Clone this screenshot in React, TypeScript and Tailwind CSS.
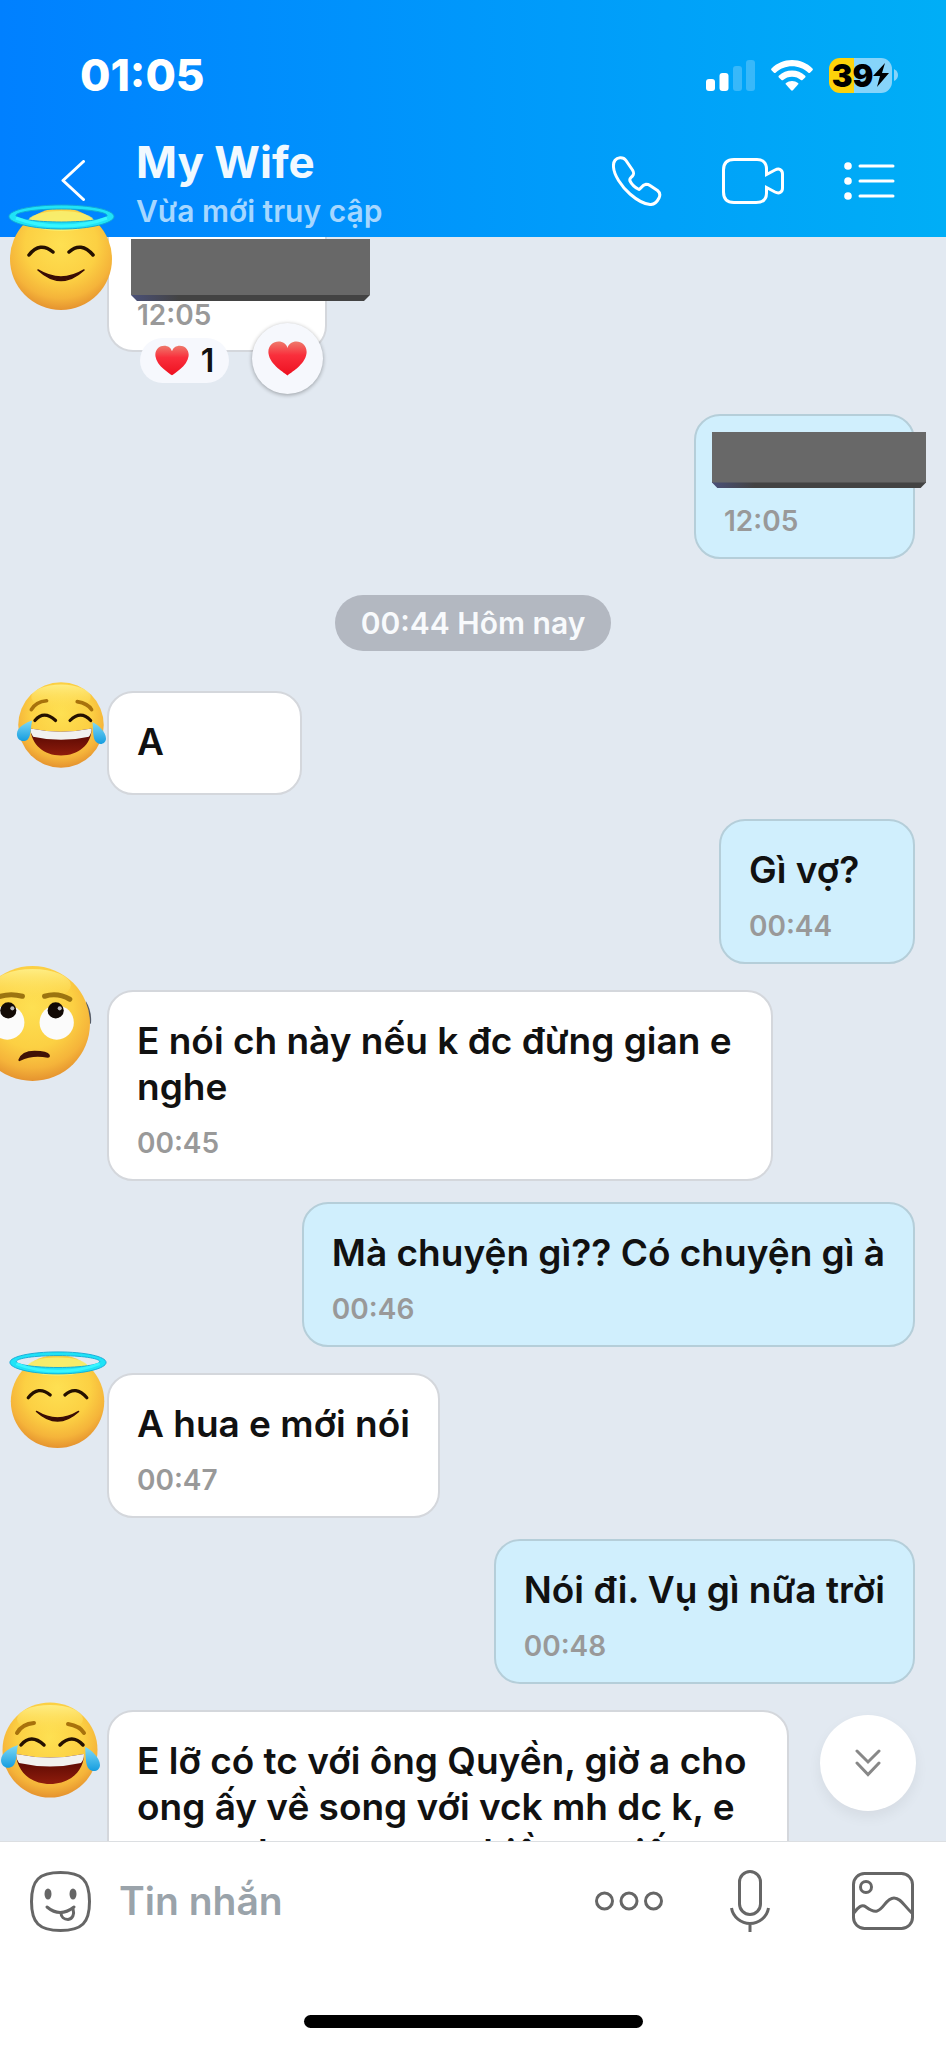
import type { ReactNode } from 'react';
import { clsx } from 'clsx';

/* ---------- emoji ---------- */

const FaceGradients = ({ id }: { id: string }) => (
  <defs>
    <radialGradient id={id} cx="50%" cy="36%" r="64%">
      <stop offset="0" stopColor="#fee052" />
      <stop offset="0.55" stopColor="#fcd043" />
      <stop offset="0.82" stopColor="#f5b43a" />
      <stop offset="1" stopColor="#e5932f" />
    </radialGradient>
    <linearGradient id={`${id}-shine`} x1="0" y1="0" x2="0" y2="1">
      <stop offset="0" stopColor="#fff08a" stopOpacity="0.9" />
      <stop offset="1" stopColor="#ffe25a" stopOpacity="0" />
    </linearGradient>
    <linearGradient id={`${id}-tear`} x1="0" y1="0" x2="0" y2="1">
      <stop offset="0" stopColor="#7fd9f5" />
      <stop offset="1" stopColor="#159de0" />
    </linearGradient>
    <linearGradient id={`${id}-mouth`} x1="0" y1="0" x2="0" y2="1">
      <stop offset="0" stopColor="#4d0500" />
      <stop offset="1" stopColor="#8f1c0c" />
    </linearGradient>
  </defs>
);

const HaloEmoji = ({ id, className }: { id: string; className: string }) => (
  <svg viewBox="0 0 107 107" className={className} role="img" aria-label="😇">
    <FaceGradients id={id} />
    <circle cx="53" cy="55" r="51" fill={`url(#${id})`} />
    <ellipse cx="53" cy="17" rx="33" ry="10" fill="#f6f374" opacity="0.8" />
    <path
      fillRule="evenodd"
      fill="#1fe3f7"
      stroke="#12a9d6"
      strokeWidth="1"
      d="M53.500 1C83 1 106 6 106 12.500S83 25 53.500 25 1 19 1 12.500 24 1 53.500 1ZM53.500 5C28 5 8 8 8 11.500S28 18 53.500 18 99 15 99 11.500 79 5 53.500 5Z"
    />
    <path d="M8 14Q28 22 53.500 22T99 14" fill="none" stroke="#38f6ff" strokeWidth="3" />
    <path
      d="M21 51Q32 37 45 48M61 48Q73 37 85 51"
      fill="none"
      stroke="#241000"
      strokeWidth="3.500"
      strokeLinecap="round"
    />
    <path d="M30 66Q53 87 76 66Q53 80 30 66Z" fill="#3a0d05" stroke="#3a0d05" strokeWidth="1.500" strokeLinejoin="round" />
  </svg>
);

const JoyEmoji = ({ id, className }: { id: string; className: string }) => (
  <svg viewBox="0 0 100 96" className={className} role="img" aria-label="😂">
    <FaceGradients id={id} />
    <circle cx="50" cy="48" r="47.500" fill={`url(#${id})`} />
    <ellipse cx="50" cy="17" rx="33" ry="14" fill={`url(#${id}-shine)`} />
    <path
      d="M17 31Q22 22 34 21M68 22Q80 24 84 31"
      fill="none"
      stroke="#a8720c"
      strokeWidth="4"
      strokeLinecap="round"
    />
    <path
      d="M21 43Q31 31 44 43M60 43Q72 31 83 43"
      fill="none"
      stroke="#241000"
      strokeWidth="3.500"
      strokeLinecap="round"
    />
    <path d="M16 52Q50 59 84 52C84 70 69 82 50 82S17 70 16 52Z" fill={`url(#${id}-mouth)`} />
    <path d="M16 52Q50 59 84 52Q84 58 81 61Q50 68 19 61Q16 57 16 52Z" fill="#f1f1ef" />
    <path d="M18 43C12 45 1 50 1 58C1 65 8 68 13 64C17 60 16 51 18 43Z" fill={`url(#${id}-tear)`} />
    <path d="M85 45C91 47 100 56 100 63C100 69 93 71 89 67C85 63 86 53 85 45Z" fill={`url(#${id}-tear)`} />
  </svg>
);

const RollingEyesEmoji = ({ id, className }: { id: string; className: string }) => (
  <svg viewBox="0 0 116 116" className={className} role="img" aria-label="🙄">
    <FaceGradients id={id} />
    <path d="M110 36Q116 46 115 58L108 60Z" fill="#555b66" />
    <circle cx="57" cy="58" r="57" fill={`url(#${id})`} />
    <ellipse cx="57" cy="20" rx="38" ry="16" fill={`url(#${id}-shine)`} />
    <path d="M20 33Q33 27 47 31M69 31Q82 27 94 34" fill="none" stroke="#9c7410" strokeWidth="5" strokeLinecap="round" />
    <ellipse cx="32" cy="57" rx="17" ry="17" fill="#fbfbfb" />
    <ellipse cx="81" cy="57" rx="17" ry="17" fill="#fbfbfb" />
    <circle cx="33" cy="45" r="8" fill="#120a05" />
    <circle cx="80" cy="45" r="8" fill="#120a05" />
    <circle cx="37" cy="43" r="2" fill="#bbb" />
    <circle cx="84" cy="43" r="2" fill="#bbb" />
    <path d="M43 94Q46 85 59 85T74 89Q75 92 72 92Q57 89 45 95Q43 96 43 94Z" fill="#3f1206" />
  </svg>
);

const Heart = ({ id, className }: { id: string; className: string }) => (
  <svg viewBox="0 0 39 35" className={className} aria-hidden="true">
    <defs>
      <linearGradient id={id} x1="0" y1="0" x2="0" y2="1">
        <stop offset="0" stopColor="#ee7a6c" />
        <stop offset="0.4" stopColor="#f92f3c" />
        <stop offset="1" stopColor="#ee1020" />
      </linearGradient>
    </defs>
    <path
      fill={`url(#${id})`}
      d="M19.500 34.500C17 32 2 24 .5 12.500C-.5 5 5 .5 10.500 .5C15 .5 18.500 3 19.500 7C20.500 3 24 .5 28.500 .5C34 .5 39.500 5 38.500 12.500C37 24 22 32 19.500 34.500Z"
    />
  </svg>
);

/* ---------- chat pieces ---------- */

// solid block that hides a message's text
const Redacted = ({ id, className }: { id: string; className: string }) => (
  <svg viewBox="0 0 240 62" preserveAspectRatio="none" className={clsx('absolute', className)} aria-hidden="true">
    <defs>
      <linearGradient id={id}>
        <stop offset="0" stopColor="#4a5078" />
        <stop offset="0.2" stopColor="#434343" />
      </linearGradient>
    </defs>
    <path d="M0 0H240V56L234 62H6L0 56Z" fill={`url(#${id})`} />
    <path d="M0 0H240V56H0Z" fill="#686868" />
  </svg>
);

interface BubbleProps {
  mine?: boolean;
  text?: string;
  time?: string;
  className?: string;
  children?: ReactNode;
}

const Bubble = ({ mine = false, text, time, className, children }: BubbleProps) => (
  <div
    className={clsx(
      'relative rounded-[26px] border-2 px-7',
      mine ? 'border-[#b5ced9] bg-[#d0effd]' : 'border-[#d4d7dc] bg-white',
      className,
    )}
  >
    {text && <p className="text-[37px] leading-[46px] font-semibold text-[#111]">{text}</p>}
    {time && <time className="block text-[28px] leading-[34px] font-semibold text-[#999]">{time}</time>}
    {children}
  </div>
);

const PADDED = 'pt-[26px] pb-[19px] [&>p]:mb-4';

const Received = ({ children, className }: { children: ReactNode; className?: string }) => (
  <div className={clsx('relative flex justify-start pl-[107px]', className)}>{children}</div>
);

const Sent = ({ children, className }: { children: ReactNode; className?: string }) => (
  <div className={clsx('flex justify-end pr-[31px]', className)}>{children}</div>
);

/* ---------- bars ---------- */

const StatusBar = () => (
  <div className="flex h-[60px] items-center justify-between pr-12 pl-20">
    <span className="text-[44px] leading-[60px] font-extrabold text-white">01:05</span>
    <div className="flex items-center">
      <svg viewBox="0 0 49 31" className="mr-4 h-[31px] w-[49px]" aria-label="Signal">
        <rect x="0" y="19" width="9" height="12" rx="3" fill="#fff" />
        <rect x="13.500" y="13" width="9" height="18" rx="3" fill="#fff" />
        <rect x="27" y="6" width="9" height="25" rx="3" fill="#fff" opacity="0.22" />
        <rect x="40" y="0" width="9" height="31" rx="3" fill="#fff" opacity="0.22" />
      </svg>
      <svg viewBox="0 0 42 31" className="mr-4 h-[31px] w-[42px]" fill="#fff" aria-label="Wi-Fi">
        <path d="M21 0C29 0 36 3 41.500 8.500Q42.300 9.300 41.500 10.200L39 12.700Q38.200 13.400 37.400 12.700C33 8.600 27 6.300 21 6.300S9 8.600 4.600 12.700Q3.800 13.400 3 12.700L.5 10.200Q-.3 9.300 .5 8.500C6 3 13 0 21 0Z" />
        <path d="M21 10.500C26 10.500 30.600 12.400 34.200 15.700Q35 16.500 34.200 17.400L31.500 20Q30.700 20.700 29.900 20C27.500 17.900 24.400 16.700 21 16.700S14.500 17.900 12.100 20Q11.300 20.700 10.500 20L7.800 17.400Q7 16.500 7.800 15.700C11.400 12.400 16 10.500 21 10.500Z" />
        <path d="M21 21C23.300 21 25.400 21.700 27 23Q27.800 23.700 27 24.600L21.900 30.300Q21 31.200 20.100 30.300L15 24.600Q14.200 23.700 15 23C16.600 21.700 18.700 21 21 21Z" />
      </svg>
      <div className="flex items-center gap-[2px]" aria-label="Battery 39%">
        <div className="flex h-[35px] w-[63px] items-center justify-center rounded-[11px] bg-[linear-gradient(90deg,#fdd20a_39%,#86d4fa_39%)] text-[31px] leading-[35px] font-black text-black">
          39
          <svg viewBox="0 0 16 24" className="h-6 w-[16px]" aria-hidden="true">
            <path d="M12 0L0 13H7L4 24L16 10H9Z" fill="#000" />
          </svg>
        </div>
        <svg viewBox="0 0 4 12" className="h-3 w-1" aria-hidden="true">
          <path d="M0 0Q4 2 4 6T0 12Z" fill="#86d4fa" />
        </svg>
      </div>
    </div>
  </div>
);

const ChatHeader = () => (
  <header className="shrink-0 bg-linear-to-r from-[#0080ff] to-[#00aef6] pt-[45px]">
    <StatusBar />
    <div className="flex items-center pt-[31px] pr-[51px] pb-2 pl-[61px]">
      <button type="button" aria-label="Back" className="mb-1">
        <svg viewBox="0 0 24 41" className="h-[41px] w-6">
          <path
            d="M22.500 1.500L2 20.500L22.500 39.500"
            fill="none"
            stroke="#fff"
            strokeWidth="3"
            strokeLinecap="round"
            strokeLinejoin="round"
          />
        </svg>
      </button>
      <div className="ml-[51px] flex flex-1 flex-col gap-[5px]">
        <h1 className="text-[44px] leading-[52px] font-bold text-[#f1f9ff]">My Wife</h1>
        <p className="text-[30px] leading-9 font-semibold text-[#a6d7ff]">Vừa mới truy cập</p>
      </div>
      <div className="mb-1 flex items-center gap-[60px]">
        <button type="button" aria-label="Call">
          <svg viewBox="0 0 50 50" className="h-[50px] w-[50px]" fill="none" stroke="#fff" strokeWidth="3" strokeLinejoin="round">
            <path d="M1.500 11C1 5 4 2 8 1.700C11 1.500 13 3 14 4.500L20.500 14C22.300 17 22 18 20.500 20C19 22 17 22 18 25C20 29 24 32 27 33.500C28.500 33 30 29 34 28.300C36 28.300 37 28.700 38 29.400L45.500 34.500C48.500 37 48 40 47 42C45 46 42 48.800 38 48.500C33 48 26 45 18 38C9 30 2 19 1.500 11Z" />
          </svg>
        </button>
        <button type="button" aria-label="Video call">
          <svg viewBox="0 0 62 46" className="h-[46px] w-[62px]" fill="none" stroke="#fff" strokeWidth="3" strokeLinejoin="miter">
            <path d="M44.500 16.500V11C44.500 5 41 1.500 35 1.500H12C5 1.500 1.500 5 1.500 12V34C1.500 41 5 44.500 12 44.500H34C41 44.500 44.500 41 44.500 35V29.500L53 34C57 36 60.500 34.500 60.500 30V16C60.500 11.500 57 10 53 12Z" />
          </svg>
        </button>
        <button type="button" aria-label="Menu">
          <svg viewBox="0 0 51 38" className="h-[38px] w-[51px]" fill="#fff" stroke="#fff" strokeWidth="3" strokeLinecap="round">
            <path d="M16 4H49M16 19H49M16 34H49" />
            <g stroke="none">
              <circle cx="4" cy="4" r="3.800" />
              <circle cx="4" cy="19" r="3.800" />
              <circle cx="4" cy="34" r="3.800" />
            </g>
          </svg>
        </button>
      </div>
    </div>
  </header>
);

const Composer = () => (
  <footer className="shrink-0 border-t border-[#dcdfe2] bg-white pb-5">
    <div className="flex h-[118px] items-center pr-8 pl-[30px] text-[#666]">
      <button type="button" aria-label="Stickers">
        <svg viewBox="0 0 61 61" className="h-[61px] w-[61px]" fill="none" stroke="currentColor" strokeWidth="3">
          <path d="M30.500 1.500C52 1.500 59.500 9 59.500 30.500S52 59.500 30.500 59.500 1.500 52 1.500 30.500 9 1.500 30.500 1.500Z" />
          <path d="M17 36Q30 47 44 36" strokeLinecap="round" />
          <path d="M31 42C31 46 34 48.500 38 48.500C43 48 44.500 43 43 38" />
          <ellipse cx="18" cy="23" rx="3.500" ry="5.500" fill="currentColor" stroke="none" />
          <ellipse cx="43" cy="23" rx="3.500" ry="5.500" fill="currentColor" stroke="none" />
        </svg>
      </button>
      <input
        type="text"
        aria-label="Tin nhắn"
        placeholder="Tin nhắn"
        className="ml-7 h-16 min-w-0 flex-1 bg-transparent text-[39px] leading-[64px] font-semibold text-[#111] outline-none placeholder:text-[#9aa3aa]"
      />
      <button type="button" aria-label="More">
        <svg viewBox="0 0 68 20" className="h-5 w-[68px]" fill="none" stroke="currentColor" strokeWidth="3">
          <circle cx="9.500" cy="10" r="8" />
          <circle cx="34" cy="10" r="8" />
          <circle cx="58.500" cy="10" r="8" />
        </svg>
      </button>
      <button type="button" aria-label="Voice message" className="ml-[67px]">
        <svg viewBox="0 0 40 62" className="h-[62px] w-10" fill="none" stroke="currentColor" strokeWidth="3">
          <rect x="9.500" y="1.500" width="21" height="43" rx="10.500" />
          <path d="M1.500 38C3 47 11 53.500 20 53.500S37 47 38.500 38M20 53.500V62" />
        </svg>
      </button>
      <button type="button" aria-label="Photos" className="ml-[82px]">
        <svg viewBox="0 0 62 58" className="h-[58px] w-[62px]" fill="none" stroke="currentColor" strokeWidth="3">
          <rect x="1.500" y="1.500" width="59" height="55" rx="11" />
          <circle cx="14" cy="15" r="5.500" />
          <path d="M2 41C6 35 10 32 14 35C18 38 21 40 25 39C32 37 34 26 42 26C49 26 52 34 60 41" />
        </svg>
      </button>
    </div>
    <div className="mx-auto mt-[55px] h-[13px] w-[339px] rounded-full bg-black" />
  </footer>
);

export default function App() {
  return (
    <div className="flex h-screen flex-col bg-[#e2e9f1] font-['Inter',sans-serif]">
      <ChatHeader />

      <main className="relative min-h-0 flex-1">
        <div className="h-full overflow-hidden">
          {/* oldest message, cut by the header */}
          <Received>
            <Bubble time="12:05" className="w-[220px] rounded-t-none border-t-0 pt-[61px] pb-[18px]">
              <Redacted id="redacted-1" className="top-[2px] left-[22px] h-[62px] w-[239px]" />
              <div className="absolute top-[101px] left-[31px] flex h-[45px] w-[89px] items-center justify-center gap-3 rounded-full bg-[#f6f8fd] text-[32px] leading-[45px] font-semibold text-[#111]">
                <Heart id="heart-count" className="h-[31px] w-[34px]" />1
              </div>
              <button
                type="button"
                aria-label="React"
                className="absolute top-[86px] left-[143px] flex h-[71px] w-[71px] items-center justify-center rounded-full bg-[#f6f8fd] shadow-[0_1px_4px_#0005]"
              >
                <Heart id="heart-button" className="h-[35px] w-[39px]" />
              </button>
            </Bubble>
          </Received>

          <Sent className="mt-[62px]">
            <Bubble mine time="12:05" className="w-[221px] pt-[88px] pb-[19px]">
              <Redacted id="redacted-2" className="top-4 left-4 h-[56px] w-[214px]" />
            </Bubble>
          </Sent>

          <div className="mt-9 flex justify-center">
            <span className="rounded-full bg-[#b3b8c1] px-[26px] text-[30px] leading-[56px] font-semibold text-[#f8fafc]">
              00:44 Hôm nay
            </span>
          </div>

          <Received className="mt-10">
            <JoyEmoji id="joy-1" className="absolute -top-[10px] left-4 h-[88px] w-[90px]" />
            <Bubble text="A" className="min-w-[195px] pt-[26px] pb-7" />
          </Received>

          <Sent className="mt-6">
            <Bubble mine text="Gì vợ?" time="00:44" className={clsx(PADDED, 'min-w-[196px]')} />
          </Sent>

          <Received className="mt-[26px]">
            <RollingEyesEmoji id="rolling" className="absolute -top-[25px] -left-[25px] h-[117px] w-[117px]" />
            <Bubble
              text="E nói ch này nếu k đc đừng gian e nghe"
              time="00:45"
              className={clsx(PADDED, 'w-[666px]')}
            />
          </Received>

          <Sent className="mt-[21px]">
            <Bubble mine text="Mà chuyện gì?? Có chuyện gì à" time="00:46" className={PADDED} />
          </Sent>

          <Received className="mt-[26px]">
            <HaloEmoji id="halo-2" className="absolute -top-[22px] left-[9px] h-[98px] w-[98px]" />
            <Bubble text="A hua e mới nói" time="00:47" className={PADDED} />
          </Received>

          <Sent className="mt-[21px]">
            <Bubble mine text="Nói đi. Vụ gì nữa trời" time="00:48" className={PADDED} />
          </Sent>

          <Received className="mt-[26px]">
            <JoyEmoji id="joy-2" className="absolute -top-[8px] left-0 h-[96px] w-[100px]" />
            <Bubble
              text="E lỡ có tc với ông Quyền, giờ a cho ong ấy về song với vck mh dc k, e con ra k tt mua xe nhiều m giếng"
              time="00:48"
              className={clsx(PADDED, 'w-[682px]')}
            />
          </Received>
        </div>

        {/* sits over the header edge, so it lives outside the clipped list */}
        <HaloEmoji id="halo-1" className="absolute -top-[33px] left-[8px] h-[107px] w-[107px]" />

        <button
          type="button"
          aria-label="Scroll to latest"
          className="absolute right-[30px] bottom-[30px] flex h-24 w-24 items-center justify-center rounded-full bg-white shadow-[0_6px_14px_#0000000f]"
        >
          <svg viewBox="0 0 26 28" className="h-7 w-[26px]" fill="none" stroke="#888" strokeWidth="3" strokeLinecap="round">
            <path d="M2 2L13 13L24 2M2 14L13 25.500L24 14" />
          </svg>
        </button>
      </main>

      <Composer />
    </div>
  );
}
